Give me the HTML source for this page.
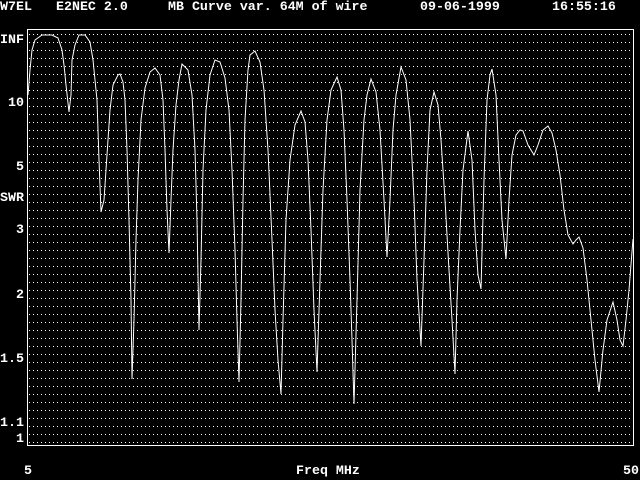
<!DOCTYPE html>
<html><head><meta charset="utf-8"><style>
html,body{margin:0;padding:0;background:#000;width:640px;height:480px;overflow:hidden}
.t{position:absolute;color:#fff;font-family:"Liberation Mono",monospace;font-size:13.3px;font-weight:bold;line-height:14px;white-space:pre}
svg{position:absolute;left:0;top:0}
</style></head><body>
<svg width="640" height="480" shape-rendering="crispEdges">
<g stroke="#fff" stroke-width="1" stroke-dasharray="1 3">
<path d="M29 34.5H631M29 42.5H631M29 50.5H631M29 58.5H631M29 66.5H631M29 74.5H631M29 82.5H631M29 90.5H631M29 98.5H631M29 106.5H631M29 114.5H631M29 122.5H631M29 130.5H631M29 138.5H631M29 146.5H631M29 154.5H631M29 162.5H631M29 170.5H631M29 178.5H631M29 186.5H631M29 194.5H631M29 202.5H631M29 210.5H631M29 218.5H631M29 226.5H631M29 234.5H631M29 242.5H631M29 250.5H631M29 258.5H631M29 266.5H631M29 274.5H631M29 282.5H631M29 290.5H631M29 298.5H631M29 306.5H631M29 314.5H631M29 322.5H631M29 330.5H631M29 338.5H631M29 346.5H631M29 354.5H631M29 362.5H631M29 370.5H631M29 378.5H631M29 386.5H631M29 394.5H631M29 402.5H631M29 410.5H631M29 418.5H631M29 426.5H631M29 434.5H631M29 442.5H631"/>
</g>
<rect x="27.5" y="29.5" width="606" height="416" fill="none" stroke="#fff" stroke-width="1"/>
<polyline fill="none" stroke="#fff" stroke-width="1" shape-rendering="auto" points="28,95 30,70 32,50 35,40 42,35 52,35 58,38 62,50 64,65 66,85 69,112 71,95 72,60 75,45 79,35 85,35 90,42 93,60 97,100 99,160 101,212 104,200 106,170 110,110 113,85 118,75 120,74 123,82 125,100 127,150 129,220 131,300 132,379 134,320 136,240 138,180 141,120 145,88 150,72 155,68 160,75 163,100 165,150 167,210 169,253 171,200 173,150 176,105 179,80 182,64 188,70 192,95 195,150 197,220 199,330 201,260 203,170 206,110 210,75 215,60 220,62 225,78 229,110 232,170 235,250 237,320 239,382 241,300 243,200 245,120 248,70 250,55 255,51 260,62 264,90 268,150 272,240 275,310 278,360 281,394 283,320 286,220 290,160 295,125 301,111 305,122 308,160 311,230 314,310 317,372 320,280 323,190 327,120 331,90 337,77 341,90 344,130 347,200 350,280 352,340 354,404 357,300 360,190 364,120 367,95 371,79 376,92 380,130 384,200 387,257 390,200 393,130 396,95 401,67 406,80 410,120 414,200 417,280 421,346 424,260 427,170 430,110 434,92 438,105 441,140 445,200 449,270 452,320 455,374 457,300 460,230 463,170 468,131 472,160 475,230 478,275 481,289 484,180 487,100 490,75 492,69 496,95 499,160 502,220 506,259 509,200 512,155 516,135 520,130 523,131 528,145 534,155 538,145 543,130 548,126 552,133 556,150 560,175 564,210 568,235 573,244 576,240 579,237 583,248 587,280 591,320 595,360 599,392 603,350 607,320 613,302 617,320 620,340 623,346 626,320 629,290 633,239"/>
</svg>
<div class="t" style="left:0;top:0">W7EL</div>
<div class="t" style="left:56px;top:0">E2NEC 2.0</div>
<div class="t" style="left:168px;top:0">MB Curve var. 64M of wire</div>
<div class="t" style="left:420px;top:0">09-06-1999</div>
<div class="t" style="left:552px;top:0">16:55:16</div>
<div class="t" style="left:0;top:33px">INF</div>
<div class="t" style="left:8px;top:96px">10</div>
<div class="t" style="left:16px;top:160px">5</div>
<div class="t" style="left:0;top:191px">SWR</div>
<div class="t" style="left:16px;top:223px">3</div>
<div class="t" style="left:16px;top:288px">2</div>
<div class="t" style="left:0;top:352px">1.5</div>
<div class="t" style="left:0;top:416px">1.1</div>
<div class="t" style="left:16px;top:432px">1</div>
<div class="t" style="left:24px;top:464px">5</div>
<div class="t" style="left:296px;top:464px">Freq MHz</div>
<div class="t" style="left:623px;top:464px">50</div>
</body></html>
